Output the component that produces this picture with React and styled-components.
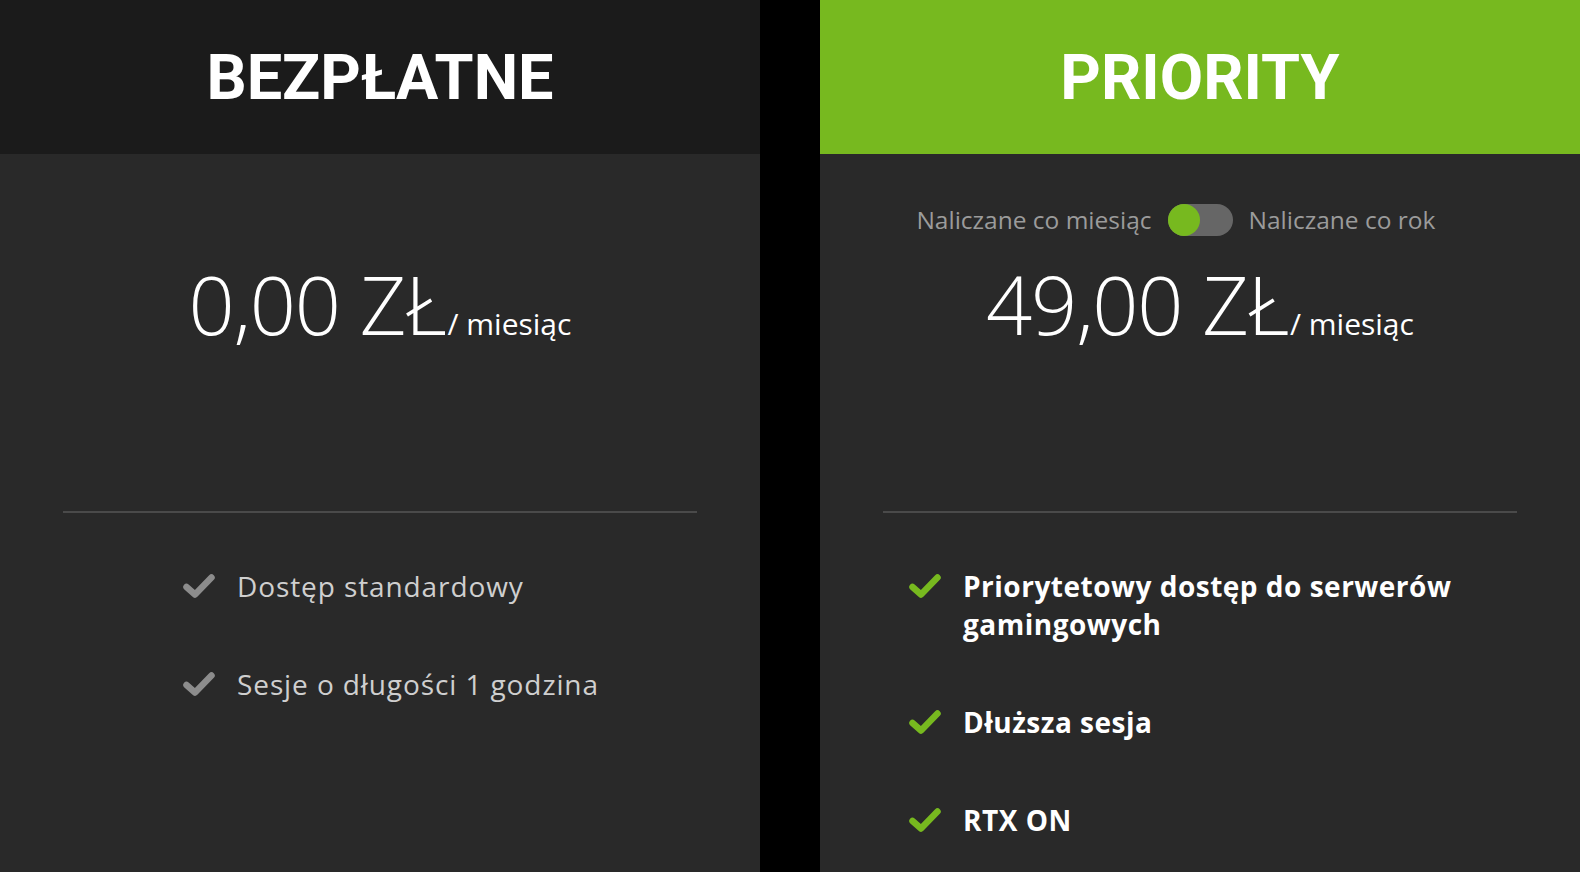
import React from 'react';
import styled, { createGlobalStyle } from 'styled-components';

const GlobalStyle = createGlobalStyle`
  html, body { margin: 0; padding: 0; background: #000; }
  body { font-family: "Open Sans", "Noto Sans", sans-serif; }
`;

const Page = styled.div`
  display: grid;
  grid-template-columns: 1fr 1fr;
  column-gap: 60px;
  width: 1580px;
  height: 872px;
  overflow: hidden;
  background: #000;
`;

const Card = styled.section`
  display: flex;
  flex-direction: column;
  background: #292929;
`;

const Header = styled.header`
  height: 154px;
  display: flex;
  align-items: center;
  justify-content: center;
  background: ${(p) => (p.$accent ? '#77b91f' : '#1b1b1b')};
`;

const Title = styled.h2`
  margin: 0;
  color: #fff;
  font-family: Roboto, "Open Sans", sans-serif;
  font-weight: 700;
  font-size: 63px;
  line-height: 1;
`;

const Top = styled.div`
  height: 357px;
  display: flex;
  flex-direction: column;
  align-items: center;
  padding-top: 50px;
  box-sizing: border-box;
`;

const BillingRow = styled.div`
  display: grid;
  grid-template-columns: 1fr auto 1fr;
  align-items: center;
  column-gap: 16px;
  width: 100%;
  height: 32px;
  visibility: ${(p) => (p.$hidden ? 'hidden' : 'visible')};
`;

const BillingLabel = styled.span`
  color: #9b9b9b;
  font-size: 24.5px;
  line-height: 32px;
  text-align: ${(p) => p.$align};
  white-space: nowrap;
`;

const Switch = styled.button`
  position: relative;
  width: 65px;
  height: 32px;
  padding: 0;
  border: 0;
  border-radius: 16px;
  background: #666;
  cursor: pointer;

  &::before {
    content: '';
    position: absolute;
    left: 0;
    top: 0;
    width: 32px;
    height: 32px;
    border-radius: 50%;
    background: #77b91f;
  }
`;

const Price = styled.div`
  display: flex;
  align-items: baseline;
  margin-top: 27px;
  color: #fff;
  white-space: nowrap;
`;

const Amount = styled.span`
  font-weight: 300;
  font-size: 81px;
  letter-spacing: -1.2px;
  line-height: 81px;
`;

const Period = styled.span`
  font-weight: 400;
  font-size: 30px;
  margin-left: 2px;
`;

const Divider = styled.hr`
  margin: 0 63px;
  border: 0;
  height: 2px;
  background: #4a4a4a;
`;

const Features = styled.ul`
  list-style: none;
  margin: 0;
  padding: 54px 62px 0 ${(p) => p.$inset}px;
  display: flex;
  flex-direction: column;
  gap: 60px;
`;

const Feature = styled.li`
  display: flex;
  align-items: flex-start;
  gap: 21px;
  color: ${(p) => (p.$accent ? '#fff' : '#cfcfcf')};
  font-weight: ${(p) => (p.$accent ? 700 : 400)};
  font-size: 28px;
  letter-spacing: ${(p) => (p.$accent ? 0.5 : 0.9)}px;
  line-height: 38px;
`;

const CheckIcon = styled.svg`
  flex: none;
  width: 34px;
  height: 26px;
  margin-top: 6px;
`;

const Check = ({ accent }) => (
  <CheckIcon viewBox="0 0 34 26">
    <polyline
      points="4.5,14 13,21.5 29.5,4.5"
      fill="none"
      stroke={accent ? '#77b91f' : '#8c8c8c'}
      strokeWidth="6.5"
      strokeLinecap="round"
      strokeLinejoin="round"
    />
  </CheckIcon>
);

const plans = [
  {
    name: 'BEZPŁATNE',
    amount: '0,00 ZŁ',
    inset: 182,
    features: ['Dostęp standardowy', 'Sesje o długości 1 godzina'],
  },
  {
    name: 'PRIORITY',
    amount: '49,00 ZŁ',
    accent: true,
    billing: true,
    inset: 88,
    features: ['Priorytetowy dostęp do serwerów gamingowych', 'Dłuższa sesja', 'RTX ON'],
  },
];

const PlanCard = ({ plan }) => (
  <Card>
    <Header $accent={plan.accent}>
      <Title>{plan.name}</Title>
    </Header>
    <Top>
      <BillingRow $hidden={!plan.billing}>
        <BillingLabel $align="right">Naliczane co miesiąc</BillingLabel>
        <Switch aria-label="Naliczanie" />
        <BillingLabel $align="left">Naliczane co rok</BillingLabel>
      </BillingRow>
      <Price>
        <Amount>{plan.amount}</Amount>
        <Period>/ miesiąc</Period>
      </Price>
    </Top>
    <Divider />
    <Features $inset={plan.inset}>
      {plan.features.map((f) => (
        <Feature key={f} $accent={plan.accent}>
          <Check accent={plan.accent} />
          <span>{f}</span>
        </Feature>
      ))}
    </Features>
  </Card>
);

export default function App() {
  return (
    <>
      <GlobalStyle />
      <Page>
        {plans.map((p) => (
          <PlanCard key={p.name} plan={p} />
        ))}
      </Page>
    </>
  );
}
